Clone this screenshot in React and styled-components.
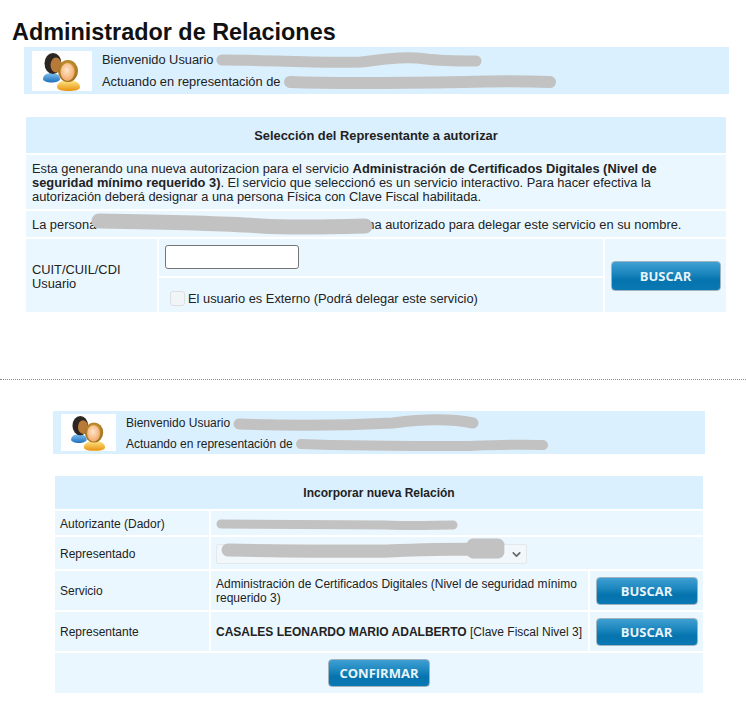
import { useId } from "react";
import styled, { createGlobalStyle } from "styled-components";
import { ChevronDown } from "lucide-react";

const GlobalStyle = createGlobalStyle`
  html, body { margin: 0; padding: 0; background: #fff; }
  body { font-family: "Liberation Sans", Arial, sans-serif; font-size: 12px; color: #222; }
`;

function UsersIcon({ size }) {
  const id = useId();
  return (
    <svg width={size} viewBox="0 0 60 40" aria-hidden="true">
      <defs>
        <linearGradient id={id + "b"} x1="0" y1="0" x2="0" y2="1">
          <stop offset="0" stopColor="#7fc0ec" />
          <stop offset="1" stopColor="#1f6fc0" />
        </linearGradient>
        <linearGradient id={id + "o"} x1="0" y1="0" x2="0" y2="1">
          <stop offset="0" stopColor="#ffe98a" />
          <stop offset="1" stopColor="#e8920f" />
        </linearGradient>
        <radialGradient id={id + "f"} cx="0.45" cy="0.4" r="0.6">
          <stop offset="0" stopColor="#ffe6cc" />
          <stop offset="1" stopColor="#f2a868" />
        </radialGradient>
        <radialGradient id={id + "g"} cx="0.5" cy="0.4" r="0.6">
          <stop offset="0" stopColor="#e6b040" />
          <stop offset="1" stopColor="#94691a" />
        </radialGradient>
      </defs>
      <path d="M11 28c0-4 4-6 8.500-6s8.500 2 8.500 6c0 2-4 3.500-8.500 3.500s-8.500-1.500-8.500-3.500z" fill={`url(#${id}b)`} />
      <ellipse cx="21" cy="12.500" rx="8.500" ry="10.500" fill="#2b2622" />
      <ellipse cx="24" cy="14" rx="5.500" ry="7.500" fill="#b87a38" />
      <path d="M25 36c0-4 5-7 11.500-7s11.500 3 11.500 7c0 3-5 4-11.500 4s-11.500-1-11.500-4z" fill={`url(#${id}o)`} />
      <ellipse cx="36" cy="20" rx="10" ry="11" fill={`url(#${id}g)`} />
      <ellipse cx="35.500" cy="21" rx="7" ry="9" fill={`url(#${id}f)`} />
    </svg>
  );
}

// tachadura gris sobre los datos personales
function Scribble({ w, h, d, stroke = 10, gap = 3, over = 0 }) {
  return (
    <ScribbleMark width={w} height={h} viewBox={`0 0 ${w} ${h}`} $h={h} $gap={gap} $over={over} aria-hidden="true">
      <path d={d} fill="none" stroke="#c2c2c2" strokeWidth={stroke} strokeLinecap="round" strokeLinejoin="round" />
    </ScribbleMark>
  );
}

export default function App() {
  return (
    <Page>
      <GlobalStyle />
      <Title>Administrador de Relaciones</Title>

      <Welcome $first>
        <IconBox $first><UsersIcon size={60} /></IconBox>
        <WelcomeText $first>
          <WelcomeLine>
            Bienvenido Usuario
            <Scribble
              w={266} h={22} stroke={11}
              d="M6 11 C50 11 110 14 145 13 C170 10 190 7 210 10 C225 12 240 12 260 12"
            />
          </WelcomeLine>
          <WelcomeLine>
            Actuando en representación de
            <Scribble
              w={272} h={20} stroke={12}
              d="M6 10 C60 12 120 11 180 10 C210 9 240 9 266 10"
            />
          </WelcomeLine>
        </WelcomeText>
      </Welcome>

      <PanelOne>
        <HeadCell $span={3} $h={36}>Selección del Representante a autorizar</HeadCell>
        <TextCell $span={3} $h={54}>
          <p>
            Esta generando una nueva autorizacion para el servicio{" "}
            <b>Administración de Certificados Digitales (Nivel de seguridad mínimo requerido 3)</b>.
            {" "}El servicio que seleccionó es un servicio interactivo. Para hacer efectiva la
            autorización deberá designar a una persona Física con Clave Fiscal habilitada.
          </p>
        </TextCell>
        <TextCell $span={3} $h={26}>
          <p>
            La persona
            <Scribble
              w={282} h={26} stroke={15} gap={-5} over={-6}
              d="M8 9 C70 10 130 11 170 14 C200 16 240 15 274 14"
            />
            ha autorizado para delegar este servicio en su nombre.
          </p>
        </TextCell>
        <LabelCell>CUIT/CUIL/CDI<br />Usuario</LabelCell>
        <FieldStack>
          <InputRow><CuitInput type="text" /></InputRow>
          <CheckRow>
            <ExternalCheck type="checkbox" disabled />
            <span>El usuario es Externo (Podrá delegar este servicio)</span>
          </CheckRow>
        </FieldStack>
        <ButtonCell><ActionButton type="button" $wide>BUSCAR</ActionButton></ButtonCell>
      </PanelOne>

      <Divider />

      <Welcome>
        <IconBox><UsersIcon size={55} /></IconBox>
        <WelcomeText>
          <WelcomeLine>
            Bienvenido Usuario
            <Scribble
              w={246} h={22} stroke={11}
              d="M6 12 C60 14 120 13 160 11 C190 7 220 7 240 11"
            />
          </WelcomeLine>
          <WelcomeLine>
            Actuando en representación de
            <Scribble
              w={252} h={20} stroke={10}
              d="M5 10 C60 12 120 12 170 12 C200 11 225 10 247 11"
            />
          </WelcomeLine>
        </WelcomeText>
      </Welcome>

      <PanelTwo>
        <HeadCell $span={3} $h={33}>Incorporar nueva Relación</HeadCell>
        <RowLabel $h={24}>Autorizante (Dador)</RowLabel>
        <RowValue $span={2}>
          <Scribble
            w={242} h={16} stroke={9} gap={0}
            d="M5 8 C70 8 130 9 170 9 C195 10 220 9 237 9"
          />
        </RowValue>
        <RowLabel $h={32}>Representado</RowLabel>
        <RowValue $span={2}>
          <SelectWrap>
            <Represented disabled><option /></Represented>
            <SelectArrow><ChevronDown size={13} strokeWidth={3} color="#666" /></SelectArrow>
            <SelectMask>
              <Scribble
                w={288} h={24} stroke={13} gap={0}
                d="M9 12 C70 13 130 14 170 13 C210 11 240 11 279 11 M254 7 L279 7 M254 14 L279 14"
              />
            </SelectMask>
          </SelectWrap>
        </RowValue>
        <RowLabel $h={39}>Servicio</RowLabel>
        <RowValue>Administración de Certificados Digitales (Nivel de seguridad mínimo requerido 3)</RowValue>
        <ButtonCell><ActionButton type="button">BUSCAR</ActionButton></ButtonCell>
        <RowLabel $h={39}>Representante</RowLabel>
        <RowValue><span><b>CASALES LEONARDO MARIO ADALBERTO</b> [Clave Fiscal Nivel 3]</span></RowValue>
        <ButtonCell><ActionButton type="button">BUSCAR</ActionButton></ButtonCell>
        <ConfirmCell><ActionButton type="button">CONFIRMAR</ActionButton></ConfirmCell>
      </PanelTwo>
    </Page>
  );
}

const Page = styled.div`
  width: 746px;
  height: 706px;
  overflow: hidden;
  padding-top: 17px;
  box-sizing: border-box;
`;

const Title = styled.h1`
  margin: 0 0 0 12px;
  height: 30px;
  font-size: 23.4px;
  line-height: 30px;
  font-weight: 700;
  color: #111;
`;

const Welcome = styled.div`
  display: flex;
  align-items: center;
  box-sizing: border-box;
  background: #dbf0fe;
  margin-left: ${(p) => (p.$first ? "24px" : "53px")};
  width: ${(p) => (p.$first ? "705px" : "652px")};
  height: ${(p) => (p.$first ? "47px" : "43px")};
  padding-left: 8px;
`;

const IconBox = styled.div`
  display: flex;
  background: #fff;
  flex: none;
  width: ${(p) => (p.$first ? "60px" : "55px")};
  height: ${(p) => (p.$first ? "40px" : "37px")};
`;

const WelcomeText = styled.div`
  display: flex;
  flex-direction: column;
  gap: ${(p) => (p.$first ? "8px" : "7px")};
  margin-left: 10px;
  padding-top: ${(p) => (p.$first ? "0" : "2px")};
  font-size: ${(p) => (p.$first ? "12.85px" : "12px")};
`;

const WelcomeLine = styled.div`
  display: flex;
  align-items: center;
  height: 14px;
  line-height: 14px;
  white-space: nowrap;
`;

const ScribbleMark = styled.svg`
  position: relative;
  z-index: 1;
  display: inline-block;
  vertical-align: middle;
  flex: none;
  margin: ${(p) => (14 - p.$h) / 2}px ${(p) => p.$over}px ${(p) => (14 - p.$h) / 2}px ${(p) => p.$gap}px;
`;

const PanelOne = styled.div`
  display: grid;
  grid-template-columns: 131px 444px 121px;
  gap: 2px;
  margin: 23px 0 0 26px;
  width: 700px;
  font-size: 12.85px;
`;

const PanelTwo = styled.div`
  display: grid;
  grid-template-columns: 154px 377px 113px;
  gap: 2px;
  margin: 22px 0 0 55px;
  width: 648px;
`;

const HeadCell = styled.div`
  grid-column: span ${(p) => p.$span};
  height: ${(p) => p.$h}px;
  display: flex;
  align-items: center;
  justify-content: center;
  background: #dbf0fe;
  font-weight: 700;
`;

const TextCell = styled.div`
  grid-column: span ${(p) => p.$span};
  height: ${(p) => p.$h}px;
  display: flex;
  align-items: center;
  box-sizing: border-box;
  padding: 2px 24px 0 6px;
  background: #eaf7ff;
  line-height: 14px;
  p { margin: 0; }
`;

const LabelCell = styled.div`
  box-sizing: border-box;
  padding: 24px 0 0 6px;
  background: #eaf7ff;
  line-height: 14px;
`;

const FieldStack = styled.div`
  display: flex;
  flex-direction: column;
  gap: 2px;
`;

const InputRow = styled.div`
  height: 37px;
  box-sizing: border-box;
  padding: 6px 0 0 6px;
  background: #eaf7ff;
`;

const CuitInput = styled.input`
  display: block;
  box-sizing: border-box;
  width: 134px;
  height: 24px;
  background: #fff;
  border: 1px solid #767676;
  border-radius: 3px;
  padding: 0 4px;
`;

const CheckRow = styled.div`
  height: 34px;
  display: flex;
  align-items: center;
  gap: 3px;
  box-sizing: border-box;
  padding: 6px 0 0 11px;
  background: #eaf7ff;
`;

const ExternalCheck = styled.input`
  appearance: none;
  margin: 0;
  width: 15px;
  height: 15px;
  background: #f1f5f7;
  border: 1px solid #dcdfe1;
  border-radius: 3px;
  box-sizing: border-box;
`;

const ButtonCell = styled.div`
  display: flex;
  align-items: center;
  justify-content: center;
  background: #eaf7ff;
`;

const ActionButton = styled.button`
  box-sizing: border-box;
  width: ${(p) => (p.$wide ? "110px" : "102px")};
  height: ${(p) => (p.$wide ? "30px" : "28px")};
  padding: 0;
  border: 1px solid #9fb4c0;
  border-radius: 4px;
  background: linear-gradient(#3f9fd2 0%, #1c87be 40%, #0573ad 65%, #0a78b2 100%);
  color: #e8f4fb;
  font-family: "Open Sans", "Liberation Sans", sans-serif;
  font-size: 13px;
  font-weight: 700;
`;

const Divider = styled.hr`
  margin: 67px 0 31px;
  height: 0;
  border: 0;
  border-top: 1px dotted #8a8a8a;
`;

const RowLabel = styled.div`
  display: flex;
  align-items: center;
  height: ${(p) => p.$h}px;
  box-sizing: border-box;
  padding: 1px 0 0 5px;
  background: #eaf7ff;
`;

const RowValue = styled.div`
  grid-column: span ${(p) => p.$span || 1};
  display: flex;
  align-items: center;
  box-sizing: border-box;
  padding: 1px 5px 0;
  background: #eaf7ff;
  line-height: 14px;
`;

const SelectWrap = styled.div`
  position: relative;
  display: flex;
`;

const Represented = styled.select`
  appearance: none;
  width: 311px;
  height: 20px;
  box-sizing: border-box;
  background: #f4f8fa;
  border: 1px solid #dfe3e5;
  border-radius: 2px;
`;

const SelectArrow = styled.span`
  position: absolute;
  top: 4px;
  right: 4px;
  display: flex;
`;

const SelectMask = styled.div`
  position: absolute;
  top: -1px;
  left: 3px;
`;

const ConfirmCell = styled.div`
  grid-column: span 3;
  height: 40px;
  display: flex;
  align-items: center;
  justify-content: center;
  background: #eaf7ff;
`;
